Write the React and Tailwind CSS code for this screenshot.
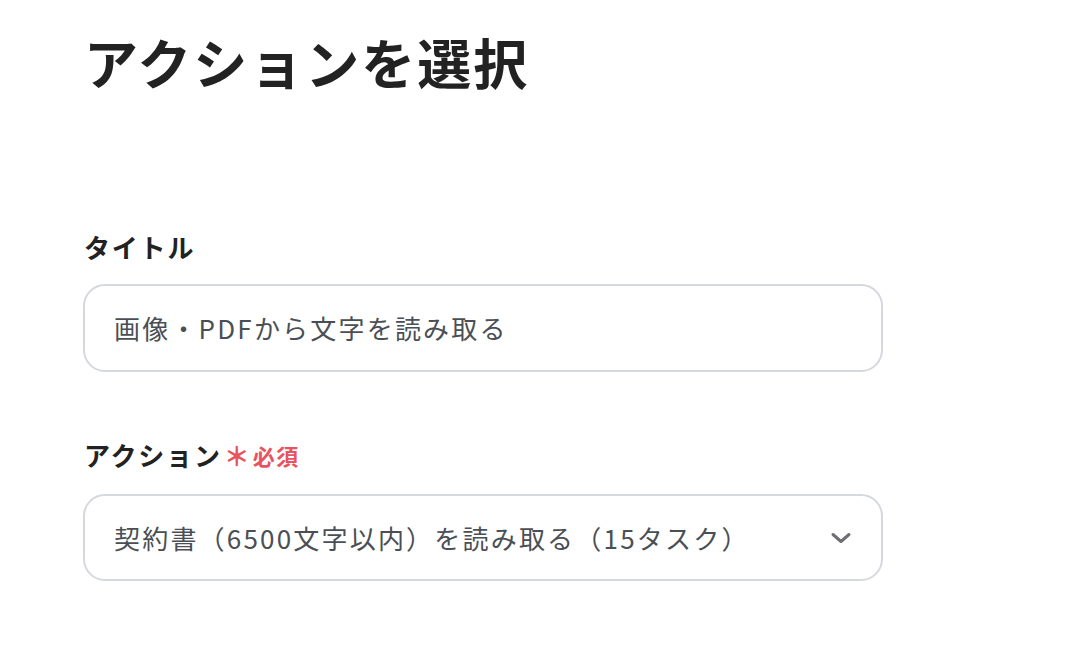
import React from "react";

function ChevronDown() {
  return (
    <svg width="22" height="14" viewBox="0 0 22 14" fill="none">
      <path
        d="M3 3.5L11 10.5L19 3.5"
        stroke="#6b6f74"
        strokeWidth="3"
        strokeLinecap="round"
        strokeLinejoin="round"
      />
    </svg>
  );
}

export default function App() {
  return (
    <div
      className="min-h-[652px] w-[1092px] bg-white pl-[83px] pt-[22px] text-[#222222]"
      style={{ fontFamily: '"Noto Sans CJK JP", "Noto Sans", sans-serif' }}
    >
      <h1 className="pl-px text-[54px] font-bold leading-[80px] tracking-[2px]">
        アクションを選択
      </h1>

      <div className="mt-[128px] w-[800px]">
        <label className="block pl-px text-[26px] font-bold leading-[34px] tracking-[1.8px]">
          タイトル
        </label>
        <div className="mt-[20px] flex h-[88px] items-center rounded-[22px] border-2 border-[#d5d8dc] px-[29px]">
          <span className="text-[26px] leading-none tracking-[2.2px] text-[#4a4f55]">
            画像・PDFから文字を読み取る
          </span>
        </div>
      </div>

      <div className="mt-[66px] w-[800px]">
        <label className="flex items-center pl-px text-[26px] font-bold leading-[34px] tracking-[1.8px]">
          アクション
          <span className="ml-[2px] text-[26px] font-bold leading-none tracking-normal text-[#e8535d]">＊</span>
          <span className="ml-[3px] text-[22px] font-bold tracking-[1.5px] text-[#e8535d]">
            必須
          </span>
        </label>
        <div className="mt-[22px] flex h-[87px] items-center justify-between rounded-[22px] border-2 border-[#d5d8dc] pl-[29px] pr-[29px]">
          <span className="text-[26px] leading-none tracking-[2.2px] text-[#4a4f55]">
            契約書（6500文字以内）を読み取る（15タスク）
          </span>
          <ChevronDown />
        </div>
      </div>
    </div>
  );
}
